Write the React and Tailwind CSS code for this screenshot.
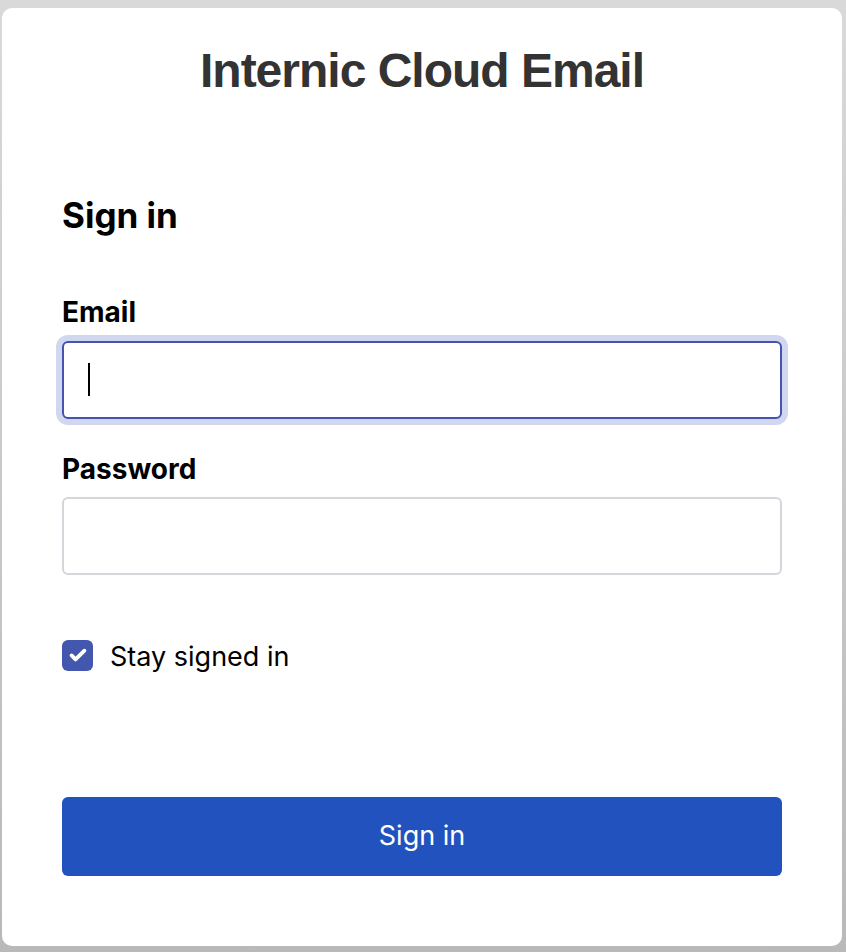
import React from 'react';

const App = () => {
  return (
    <div className="min-h-screen bg-gradient-to-b from-[#d9d9d9] to-[#b9b9b9] pt-2 pb-1.5 pl-0.5 pr-1">
      <div className="bg-white rounded-[10px] h-[938px] px-[60px] pt-[35px] font-['Inter',sans-serif]">
        <h1 className="text-center text-[48px] leading-[56px] font-bold tracking-[-1px] text-[#333] font-['Liberation_Sans',sans-serif]">
          Internic Cloud Email
        </h1>

        <h2 className="mt-[94px] text-[35px] leading-[44px] font-bold text-black">Sign in</h2>

        <form className="mt-[59px]" onSubmit={(e) => e.preventDefault()}>
          <label className="block text-[28px] leading-[32px] font-bold text-black">Email</label>
          <div className="mt-[13px] relative">
            <input
              type="email"
              autoFocus
              className="w-full h-[78px] rounded-[6px] border-2 border-[#4355b0] ring-[6px] ring-[#d1d7ee] outline-none px-[25px] text-[27px] bg-white"
            />
            <span className="absolute left-[26px] top-[22px] w-[2px] h-[33px] bg-black" />
          </div>

          <label className="block mt-[34px] text-[28px] leading-[32px] font-bold text-black">Password</label>
          <input
            type="password"
            className="mt-[12px] w-full h-[78px] rounded-[6px] border-2 border-[#d4d6db] outline-none px-[25px] text-[27px] bg-white"
          />

          <label className="mt-[62px] h-[36px] flex items-center gap-[17px]">
            <span className="w-[31px] h-[31px] rounded-[6px] bg-[#4357af] flex items-center justify-center">
              <svg width="22" height="22" viewBox="0 0 24 24" fill="none" stroke="white" strokeWidth="4.2" strokeLinecap="round" strokeLinejoin="round">
                <path d="M5 12.5l4.3 4.3L19 7.3" />
              </svg>
            </span>
            <span className="text-[27px] leading-[36px] text-black translate-y-[2px]">Stay signed in</span>
          </label>

          <button
            type="submit"
            className="mt-[124px] w-full h-[79px] rounded-[6px] bg-[#2152be] text-white text-[27px]"
          >
            Sign in
          </button>
        </form>
      </div>
    </div>
  );
};

export default App;
